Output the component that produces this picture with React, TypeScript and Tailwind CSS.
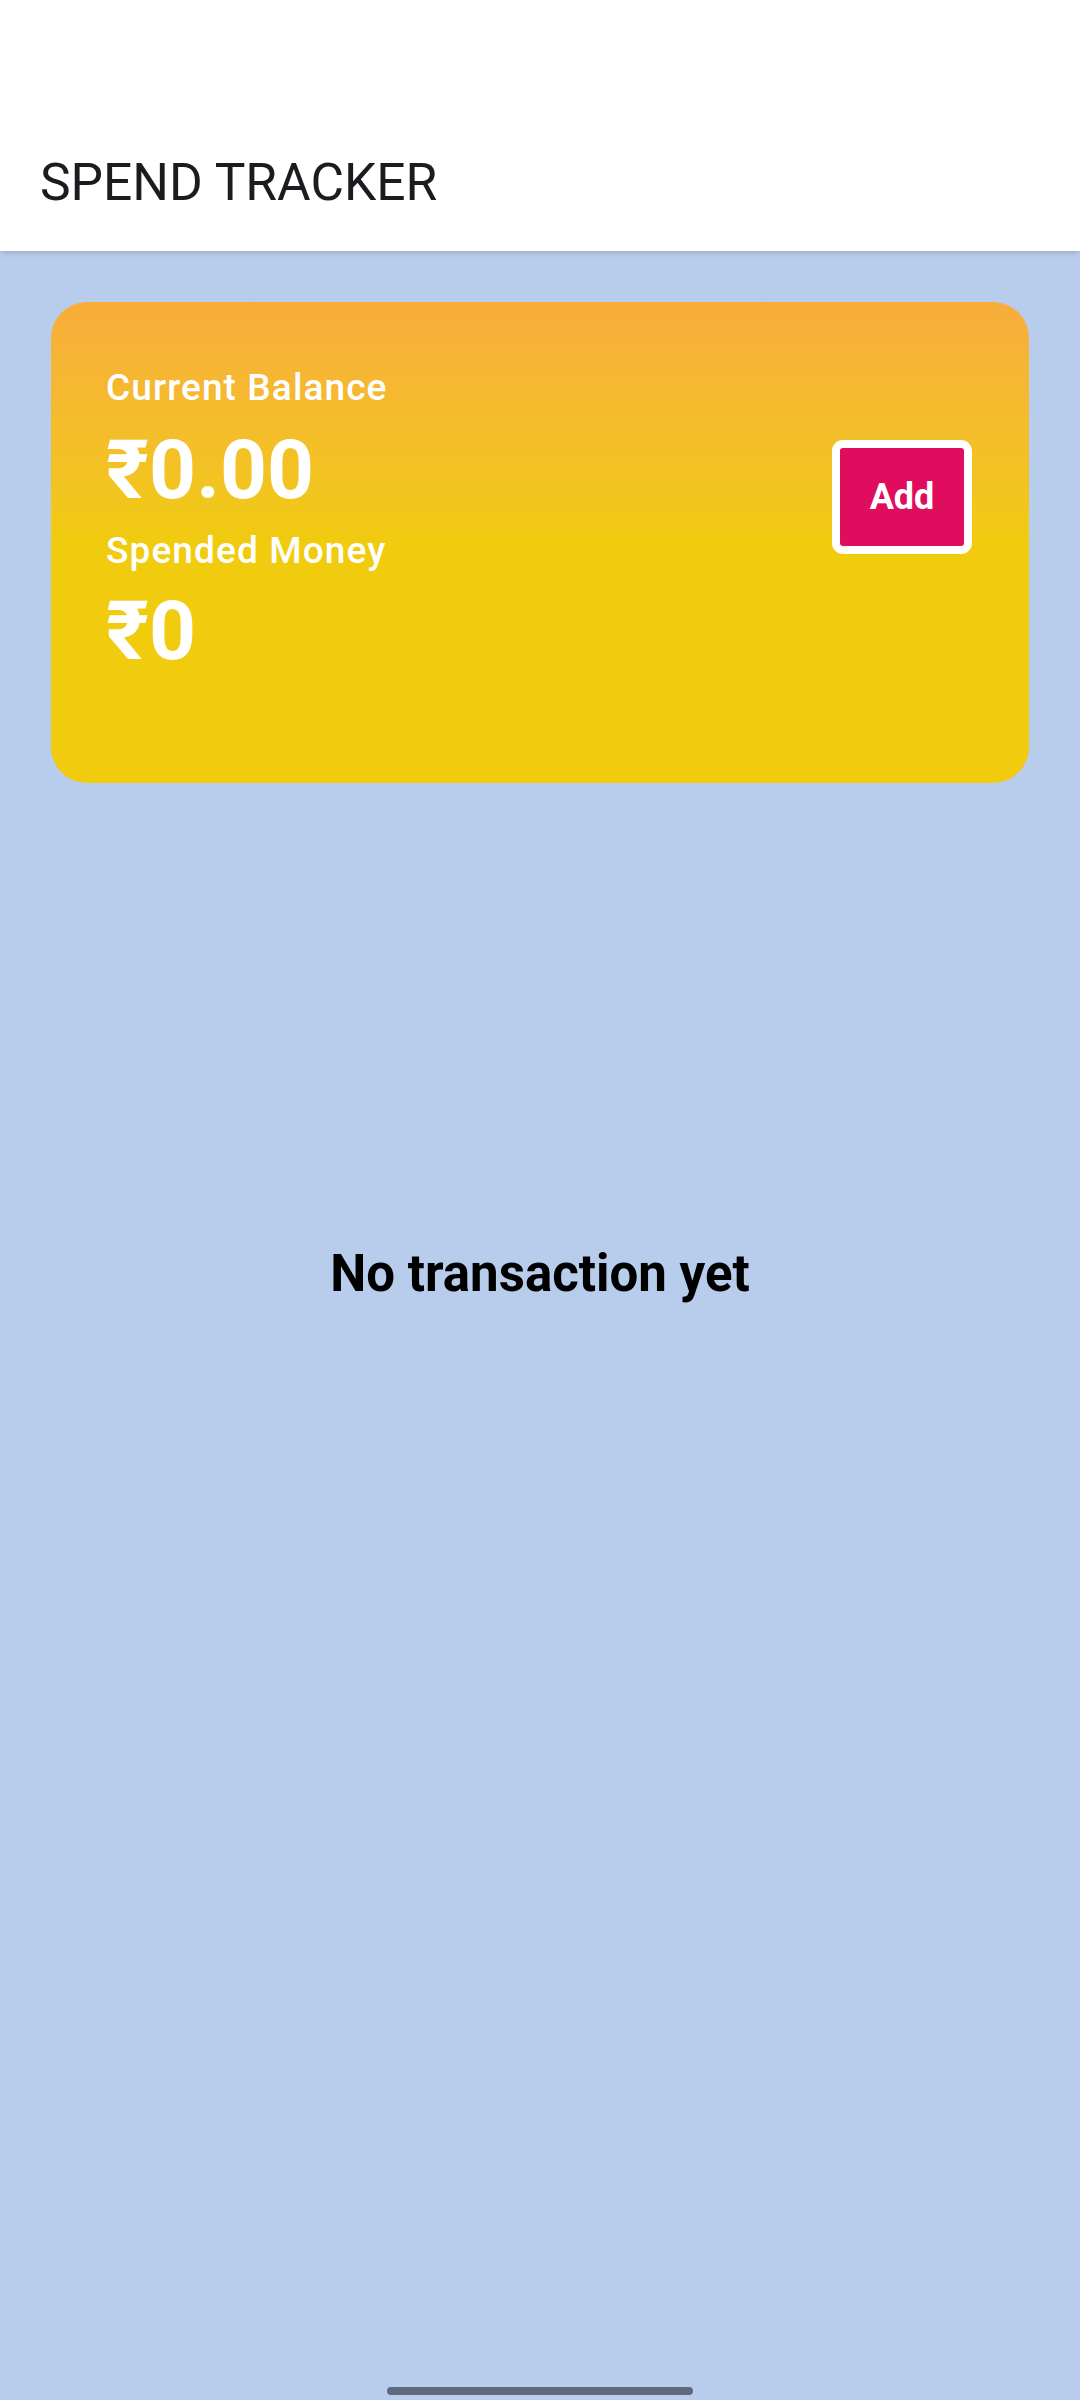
import React from "react";

const BalanceCard = () => {
  return (
    <div className="mx-[51px] mt-[51px] h-[481px] rounded-[36px] bg-linear-to-b from-[#F8AD3B] to-[#F0CB0E] to-50% pl-[55px] pr-[57px] pt-[67px] flex justify-between items-start text-white">
      <div className="flex flex-col">
        <p className="text-[37px] leading-none font-medium tracking-[0.03em]">Current Balance</p>
        <p className="mt-[23px] text-[82px] leading-none font-bold">₹0.00</p>
        <p className="mt-[21px] text-[37px] leading-none font-medium tracking-[0.03em]">Spended Money</p>
        <p className="mt-[21px] text-[82px] leading-none font-bold">₹0</p>
      </div>
      {/* add button */}
      <button className="mt-[71px] w-[140px] h-[114px] border-[8px] border-white rounded-[11px] bg-[#E00D5E] flex items-center justify-center text-[36px] leading-none font-bold text-white">
        Add
      </button>
    </div>
  );
};

const App = () => {
  return (
    <div
      className="h-[2400px] bg-[#B8CDEC] flex flex-col"
      style={{ fontFamily: "Roboto, 'Noto Sans', sans-serif" }}
    >
      <div className="h-[251px] bg-white pl-[40px] pt-[157px] shadow-md relative z-10">
        <h1 className="text-[51.5px] leading-none font-normal text-[#1D1B20]">SPEND TRACKER</h1>
      </div>

      <BalanceCard />

      <p className="mt-[465px] text-center text-[51px] leading-none font-bold text-black">
        No transaction yet
      </p>

      <div className="flex-1" />
      <div className="mx-auto mb-[5px] w-[306px] h-[8px] rounded-full bg-[#5F6A7D]" />
    </div>
  );
};

export default App;
